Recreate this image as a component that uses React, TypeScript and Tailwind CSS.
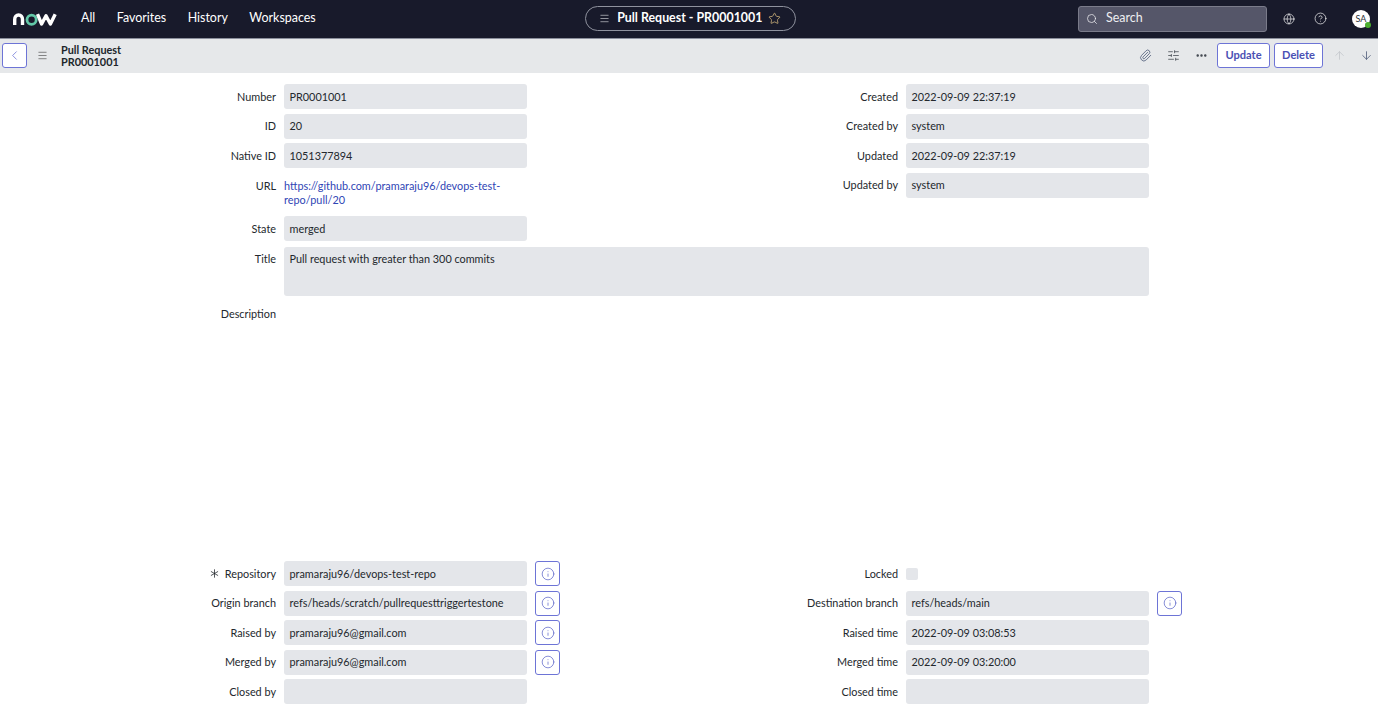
import { ArrowDown, ArrowUp, ChevronLeft, CircleHelp, Ellipsis, Globe, Info, Menu, Paperclip, Search, SlidersHorizontal, Star, Asterisk } from "lucide-react";

function InfoButton() {
  return (
    <button className="ml-2 w-[25px] h-[25px] rounded-[3px] border border-[#6d74d6] flex items-center justify-center text-[#5a63c8]">
      <Info className="w-[14px] h-[14px]" strokeWidth={1.25} />
    </button>
  );
}

function Field({ label, value, info, required }: { label: string; value?: string; info?: boolean; required?: boolean }) {
  return (
    <div className="flex items-center self-start">
      <div className="w-[284px] shrink-0 flex justify-end items-center pr-2 pt-px text-[#23282d]">
        {required && <Asterisk className="w-[15px] h-[15px] mr-[3px]" strokeWidth={1.25} />}
        {label}
      </div>
      <div className="w-[243px] h-[25px] shrink-0 rounded-[3px] bg-[#e4e6ea] px-[5.5px] pt-px flex items-center text-[#23282d] whitespace-nowrap">{value}</div>
      {info && <InfoButton />}
    </div>
  );
}

function NowLogo() {
  return (
    <svg width="44" height="14" viewBox="0 0 44 14" fill="none">
      <path d="M1.7 13V7.5C1.7 4.6 3.4 3 5.6 3S9.5 4.6 9.5 7.5V13" stroke="#fff" strokeWidth="3.4" />
      <circle cx="18.6" cy="7.8" r="4.6" stroke="#62c8a8" strokeWidth="2.8" />
      <path d="M24.5 2.2 28.6 12 33 3.8 37.4 12 42.2 2.2" stroke="#fff" strokeWidth="3.4" strokeLinejoin="round" />
    </svg>
  );
}

export default function App() {
  return (
    <div className="w-[1381px] h-[715px] overflow-hidden bg-white text-[10.85px] [font-family:Lato,sans-serif]">
      <div className="w-[1378px]">
        <header className="h-[39px] pb-px bg-[#181a2b] border-b border-[#8b8f9c] flex items-center text-white">
          <div className="ml-[13px] w-[44px] shrink-0"><NowLogo /></div>
          <nav className="ml-[24px] flex gap-[21.5px] text-[12.45px] whitespace-nowrap">
            <span>All</span>
            <span>Favorites</span>
            <span>History</span>
            <span>Workspaces</span>
          </nav>
          <div className="ml-[269px] w-[211px] h-[25px] shrink-0 rounded-full border border-[#8f929e] flex items-center justify-center text-[12.4px] font-bold whitespace-nowrap">
            <Menu className="w-[11px] h-[11px] mr-[7px] text-[#c9cad0]" strokeWidth={1.5} />
            Pull Request - PR0001001
            <Star className="w-[13px] h-[13px] ml-[6px] text-[#cdb27a]" strokeWidth={1.5} />
          </div>
          <div className="ml-auto w-[189px] h-[26px] shrink-0 rounded-[3px] bg-[#555669] border border-[#7a7b8a] flex items-center pl-[7px] text-[12.45px] text-[#eeeef2]">
            <Search className="w-[12px] h-[12px] mr-[8px]" strokeWidth={1.5} />
            Search
          </div>
          <Globe className="ml-[16px] w-[12px] h-[12px]" strokeWidth={1.25} />
          <CircleHelp className="ml-[19px] w-[13px] h-[13px]" strokeWidth={1.25} />
          <div className="relative ml-[25px] mr-[8px] w-[18px] h-[18px] rounded-full bg-white text-[#2e3338] flex items-center justify-center text-[9px]">
            SA
            <span className="absolute right-[-1px] bottom-0 w-[6px] h-[6px] rounded-full bg-[#4caf2f]" />
          </div>
        </header>
        <div className="h-[34px] pb-px bg-[#e6e8ea] flex items-center text-[#2e3338]">
          <button className="ml-[2px] w-[25px] h-[25px] rounded-[3px] bg-white border border-[#6d74d6] flex items-center justify-center text-[#6d74d6]">
            <ChevronLeft className="w-[15px] h-[15px]" strokeWidth={1.25} />
          </button>
          <Menu className="ml-[10px] w-[11px] h-[11px] text-[#555]" strokeWidth={1.5} />
          <div className="ml-[13px] font-bold leading-[11.5px] text-[#20262b]">
            <div>Pull Request</div>
            <div>PR0001001</div>
          </div>
          <div className="ml-auto flex items-center">
            <Paperclip className="w-[13px] h-[13px] text-[#4f5c7a]" strokeWidth={1.5} />
            <SlidersHorizontal className="ml-[15px] w-[13px] h-[13px] text-[#4a5058]" strokeWidth={1.5} />
            <Ellipsis className="ml-[15px] w-[13px] h-[13px] text-[#3a3f48]" strokeWidth={2.5} />
            <button className="ml-[9px] w-[53px] h-[25px] rounded-[3px] bg-white border border-[#6d74d6] text-[#4a50b4] text-[11.1px] font-bold">Update</button>
            <button className="ml-[4px] w-[49px] h-[25px] rounded-[3px] bg-white border border-[#6d74d6] text-[#4a50b4] text-[11.1px] font-bold">Delete</button>
            <ArrowUp className="ml-[10px] w-[13px] h-[13px] text-[#c3c6cb]" strokeWidth={1.5} />
            <ArrowDown className="ml-[14px] mr-[5px] w-[13px] h-[13px] text-[#4f5c7a]" strokeWidth={1.5} />
          </div>
        </div>

        <main className="pt-[11px]">
          <div className="grid grid-cols-[622px_1fr] gap-y-[4.5px]">
            <Field label="Number" value="PR0001001" />
            <Field label="Created" value="2022-09-09 22:37:19" />
            <Field label="ID" value="20" />
            <Field label="Created by" value="system" />
            <Field label="Native ID" value="1051377894" />
            <Field label="Updated" value="2022-09-09 22:37:19" />
            <div className="flex items-start h-[39px]">
              <div className="w-[284px] shrink-0 text-right pr-2 text-[#23282d] leading-[14px] pt-[6px]">URL</div>
              <a className="w-[243px] text-[#2f46b5] leading-[14px] pt-[6px]">https://github.com/pramaraju96/devops-test-repo/pull/20</a>
            </div>
            <Field label="Updated by" value="system" />
          </div>
          <div className="mt-[4.5px]"><Field label="State" value="merged" /></div>
          <div className="mt-[5.5px] flex items-start">
            <div className="w-[284px] shrink-0 text-right pr-2 text-[#23282d] pt-[4px]">Title</div>
            <div className="w-[865px] h-[49px] rounded-[3px] bg-[#e4e6ea] px-[5.5px] pt-[4px] text-[#23282d]">Pull request with greater than 300 commits</div>
          </div>
          <div className="mt-[10px] h-[255.5px]">
            <div className="w-[284px] text-right pr-2 text-[#23282d]">Description</div>
          </div>
          <div className="grid grid-cols-[622px_1fr] gap-y-[4.5px]">
            <Field label="Repository" value="pramaraju96/devops-test-repo" info required />
            <div className="flex items-center h-[25px]">
              <div className="w-[284px] shrink-0 text-right pr-2 pt-px text-[#23282d]">Locked</div>
              <div className="w-[12px] h-[12px] rounded-[2px] bg-[#e4e6ea] mt-px" />
            </div>
            <Field label="Origin branch" value="refs/heads/scratch/pullrequesttriggertestone" info />
            <Field label="Destination branch" value="refs/heads/main" info />
            <Field label="Raised by" value="pramaraju96@gmail.com" info />
            <Field label="Raised time" value="2022-09-09 03:08:53" />
            <Field label="Merged by" value="pramaraju96@gmail.com" info />
            <Field label="Merged time" value="2022-09-09 03:20:00" />
            <Field label="Closed by" />
            <Field label="Closed time" />
          </div>
        </main>
      </div>
    </div>
  );
}
